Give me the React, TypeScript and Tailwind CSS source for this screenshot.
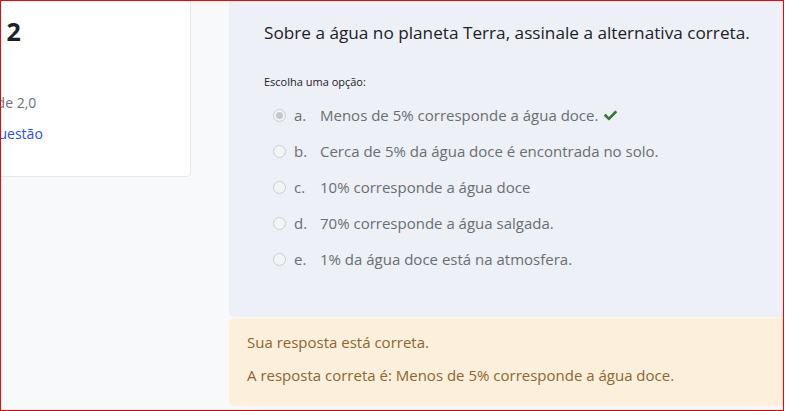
const OPTIONS = [
  { key: "a", text: "Menos de 5% corresponde a água doce.", checked: true },
  { key: "b", text: "Cerca de 5% da água doce é encontrada no solo." },
  { key: "c", text: "10% corresponde a água doce" },
  { key: "d", text: "70% corresponde a água salgada." },
  { key: "e", text: "1% da água doce está na atmosfera." },
];

function Radio({ checked }: { checked?: boolean }) {
  return (
    <span className="flex h-[13px] w-[13px] flex-none items-center justify-center rounded-full border border-[#c9cdd3] bg-[#f3f4f6]">
      {checked && <span className="h-[7px] w-[7px] rounded-full bg-[#c4c7cc]" />}
    </span>
  );
}

function Check() {
  return (
    <svg viewBox="0 0 512 512" className="h-[13px] w-[13px] fill-[#357a32]">
      <path d="M173.9 439.4l-166.4-166.4c-10-10-10-26.2 0-36.2l36.2-36.2c10-10 26.2-10 36.2 0L192 312.7 432.1 72.6c10-10 26.2-10 36.2 0l36.2 36.2c10 10 10 26.2 0 36.2l-294.4 294.4c-10 10-26.2 10-36.2 0z" />
    </svg>
  );
}

export default function App() {
  return (
    <div className="relative h-[411px] w-[785px] overflow-hidden bg-white font-['Open_Sans',sans-serif]">
      <div className="flex h-[411px] w-[784px] bg-[#f8f9fb]">
        {/* info card, scrolled partly off the left edge */}
        <div className="w-[229px] flex-none">
          <div className="-ml-[116px] -mt-[10px] h-[187px] w-[307px] rounded-[4px] border border-[#e4e7ee] bg-white pl-[10px] pt-[24px]">
            <h3 className="text-[25px] font-bold leading-[32px] text-[#1d2125]">Questão 2</h3>
            <div className="mt-[18px] text-[14px] leading-[20px] text-[#1d2125] opacity-0">Correto</div>
            <div className="ml-[29px] mt-[8px] text-[14px] leading-[20px] text-[#6a737b]">Atingiu 2,0 de 2,0</div>
            <div className="ml-[45px] mt-[11px] text-[14px] leading-[20px] text-[#1f4fef]">Marcar questão</div>
          </div>
        </div>

        <div className="flex min-w-0 flex-1 flex-col">
          <div className="h-[317px] rounded-bl-[5px] bg-[#edf0f7] pl-[35px] pt-[21px]">
            <p className="text-[17.2px] leading-[24px] text-[#1d2125]">
              Sobre a água no planeta Terra, assinale a alternativa correta.
            </p>
            <p className="mt-[29px] text-[11px] leading-[16px] text-[#1d2125]">Escolha uma opção:</p>
            <div className="mt-[14px] flex flex-col gap-[14px] pl-[9px]">
              {OPTIONS.map((o) => (
                <div key={o.key} className="flex h-[22px] items-center text-[15px] text-[#6a6e73]">
                  <Radio checked={o.checked} />
                  <span className="ml-[8px] w-[26px]">{o.key}.</span>
                  <span>{o.text}</span>
                  {o.checked && (
                    <span className="ml-[6px]">
                      <Check />
                    </span>
                  )}
                </div>
              ))}
            </div>
          </div>
          <div className="mt-px h-[88px] rounded-bl-[6px] rounded-tl-[6px] bg-[#fcefdc] pl-[18px] pt-[13px] text-[15px] leading-[22px] text-[#8e662e]">
            <p>Sua resposta está correta.</p>
            <p className="mt-[11px]">A resposta correta é: Menos de 5% corresponde a água doce.</p>
          </div>
        </div>
      </div>
      <div className="pointer-events-none absolute left-0 top-0 h-[411px] w-[784px] border border-[#ff0000]" />
    </div>
  );
}
